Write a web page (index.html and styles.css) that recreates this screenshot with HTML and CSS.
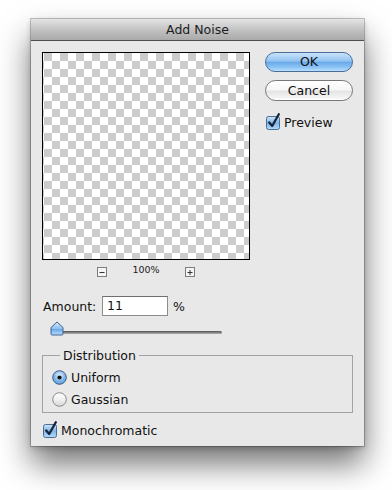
FILE: index.html
```html
<!DOCTYPE html>
<html>
<head>
<meta charset="utf-8">
<link rel="stylesheet" href="styles.css">
</head>
<body>
<div class="dialog">
  <div class="titlebar">Add Noise</div>
  <div class="body">
    <div class="top">
      <div class="leftcol">
        <div class="preview"></div>
        <div class="zoomrow">
          <svg class="zbtn" width="10" height="10" viewBox="0 0 10 10"><rect x="0.5" y="0.5" width="9" height="9" fill="#f4f4f4" stroke="#7d7d7d"/><path d="M2.5 5.5 H7.5" stroke="#333" stroke-width="1"/></svg>
          <span class="zpct">100%</span>
          <svg class="zbtn" width="10" height="10" viewBox="0 0 10 10"><rect x="0.5" y="0.5" width="9" height="9" fill="#f4f4f4" stroke="#7d7d7d"/><path d="M2.5 5.5 H7.5 M5 3 V8" stroke="#333" stroke-width="1"/></svg>
        </div>
      </div>
      <div class="rightcol">
        <div class="btn ok">OK</div>
        <div class="btn cancel">Cancel</div>
        <label class="check preview-check">
          <svg width="16" height="17" viewBox="0 0 16 17"><defs><linearGradient id="cb1" x1="0" y1="0" x2="0" y2="1"><stop offset="0" stop-color="#cfe6fb"/><stop offset="0.5" stop-color="#7fb4e8"/><stop offset="1" stop-color="#b4dcfb"/></linearGradient></defs><rect x="1.5" y="3.5" width="13" height="13" rx="2" fill="url(#cb1)" stroke="#4a6d96"/><path d="M4.2 9.5 L7.2 13 L13.8 1.2" fill="none" stroke="#18263a" stroke-width="2.3" stroke-linecap="round" stroke-linejoin="round"/></svg>
          <span>Preview</span>
        </label>
      </div>
    </div>
    <div class="amount">
      <span class="lbl">Amount:</span>
      <div class="input">11</div>
      <span class="pct">%</span>
    </div>
    <div class="slider">
      <div class="track"></div>
      <svg class="thumb" width="14" height="15" viewBox="0 0 14 15"><defs><linearGradient id="th" x1="0" y1="0" x2="0" y2="1"><stop offset="0" stop-color="#d6ebfd"/><stop offset="0.5" stop-color="#8fc0ee"/><stop offset="0.55" stop-color="#6aa6e4"/><stop offset="1" stop-color="#b6defc"/></linearGradient></defs><path d="M1 13 V6.5 L7 1 L13 6.5 V13 Q13 14 12 14 H2 Q1 14 1 13 Z" fill="url(#th)" stroke="#3f6591" stroke-width="1"/></svg>
    </div>
    <fieldset class="group">
      <legend>Distribution</legend>
      <label class="radio">
        <svg width="15" height="15" viewBox="0 0 15 15"><defs><radialGradient id="rb" cx="0.5" cy="0.35" r="0.7"><stop offset="0" stop-color="#e4f2fe"/><stop offset="0.6" stop-color="#7db3e8"/><stop offset="1" stop-color="#5b98da"/></radialGradient></defs><circle cx="7.5" cy="7.5" r="6.8" fill="url(#rb)" stroke="#3d5f87"/><circle cx="7.5" cy="7.5" r="2.1" fill="#111"/></svg>
        <span>Uniform</span>
      </label>
      <label class="radio">
        <svg width="15" height="15" viewBox="0 0 15 15"><defs><linearGradient id="rw" x1="0" y1="0" x2="0" y2="1"><stop offset="0" stop-color="#ffffff"/><stop offset="0.5" stop-color="#f0f0f0"/><stop offset="1" stop-color="#d6d6d6"/></linearGradient></defs><circle cx="7.5" cy="7.5" r="6.8" fill="url(#rw)" stroke="#8a8a8a"/></svg>
        <span>Gaussian</span>
      </label>
    </fieldset>
    <label class="check mono">
      <svg width="16" height="17" viewBox="0 0 16 17"><defs><linearGradient id="cb2" x1="0" y1="0" x2="0" y2="1"><stop offset="0" stop-color="#cfe6fb"/><stop offset="0.5" stop-color="#7fb4e8"/><stop offset="1" stop-color="#b4dcfb"/></linearGradient></defs><rect x="1.5" y="3.5" width="13" height="13" rx="2" fill="url(#cb2)" stroke="#4a6d96"/><path d="M4.2 9.5 L7.2 13 L13.8 1.2" fill="none" stroke="#18263a" stroke-width="2.3" stroke-linecap="round" stroke-linejoin="round"/></svg>
      <span>Monochromatic</span>
    </label>
  </div>
</div>
</body>
</html>
```
FILE: styles.css
```css
html, body {
  margin: 0;
  padding: 0;
  background: #ffffff;
}
body {
  width: 392px;
  height: 490px;
  overflow: hidden;
  font-family: "DejaVu Sans", sans-serif;
  font-size: 12.5px;
  color: #111;
}
.dialog {
  margin: 19px 0 0 31px;
  width: 333px;
  background: #e8e8e8;
  box-shadow: 0 0 0 1px rgba(0,0,0,0.22), 0 18px 30px rgba(0,0,0,0.55), 0 2px 6px rgba(0,0,0,0.2);
}
.titlebar {
  height: 21px;
  line-height: 22px;
  text-align: center;
  color: #1d1d1d;
  background: linear-gradient(#e4e4e4, #bdbdbd 60%, #a9a9a9);
  border-bottom: 1px solid #4e4e4e;
}
.body {
  padding: 11px 11px 8px 11px;
  display: flex;
  flex-direction: column;
}
.top {
  display: flex;
}
.leftcol {
  width: 208px;
  display: flex;
  flex-direction: column;
}
.preview {
  width: 206px;
  height: 206px;
  border: 1px solid #000;
  background: repeating-conic-gradient(#ffffff 0 25%, #cccccc 0 50%) 1px 0 / 16px 16px;
}
.zoomrow {
  height: 22px;
  display: flex;
  align-items: center;
  justify-content: center;
  gap: 0;
}
.zbtn {
  display: block;
  margin-top: 1px;
}
.zpct {
  font-size: 9.5px;
  width: 78px;
  text-align: center;
  margin-top: -3px;
  color: #222;
}
.rightcol {
  margin-left: 15px;
  width: 89px;
  display: flex;
  flex-direction: column;
}
.btn {
  box-sizing: border-box;
  height: 20px;
  border-radius: 11px;
  text-align: center;
  line-height: 18px;
  font-size: 12.5px;
}
.ok {
  border: 1px solid #4b6d98;
  background: linear-gradient(#c9e3fb 0%, #93c3f0 45%, #6aa9e8 52%, #8cc4f5 80%, #b9e0fd 100%);
}
.cancel {
  margin-top: 8px;
  height: 21px;
  line-height: 19px;
  border: 1px solid #777;
  background: linear-gradient(#ffffff 0%, #f6f6f6 48%, #e4e4e4 52%, #f2f2f2 85%, #ffffff 100%);
}
.check {
  display: flex;
  align-items: flex-end;
  gap: 3px;
}
.check svg {
  display: block;
  flex: none;
}
.check span {
  line-height: 15px;
}
.preview-check {
  margin-top: 12px;
  margin-left: 0;
}
.amount {
  margin-top: 14px;
  display: flex;
  align-items: center;
  height: 20px;
}
.lbl {
  margin-left: 1px;
  width: 59px;
}
.input {
  box-sizing: border-box;
  width: 66px;
  height: 20px;
  border: 1px solid #8d8d8d;
  border-top-color: #6e6e6e;
  background: #fff;
  padding-left: 4px;
  line-height: 18px;
}
.pct {
  margin-left: 5px;
}
.slider {
  margin-top: 5px;
  height: 15px;
  position: relative;
  width: 190px;
}
.track {
  position: absolute;
  left: 9px;
  top: 10px;
  width: 171px;
  height: 3px;
  border-radius: 2px;
  background: linear-gradient(#505050, #8a8a8a 60%, #b5b5b5);
}
.thumb {
  position: absolute;
  left: 8px;
  top: 0;
}
.group {
  margin: 12px 0 0 0;
  padding: 3px 0 2px 9px;
  border: 1px solid #a3a3a3;
  min-width: 0;
}
.group legend {
  margin-left: 8px;
  padding: 0 3px;
  line-height: 15px;
}
.radio {
  display: flex;
  align-items: center;
  gap: 4px;
  height: 22px;
}
.radio svg {
  display: block;
  flex: none;
}
.mono {
  margin-top: 8px;
  margin-left: 0;
}
```
